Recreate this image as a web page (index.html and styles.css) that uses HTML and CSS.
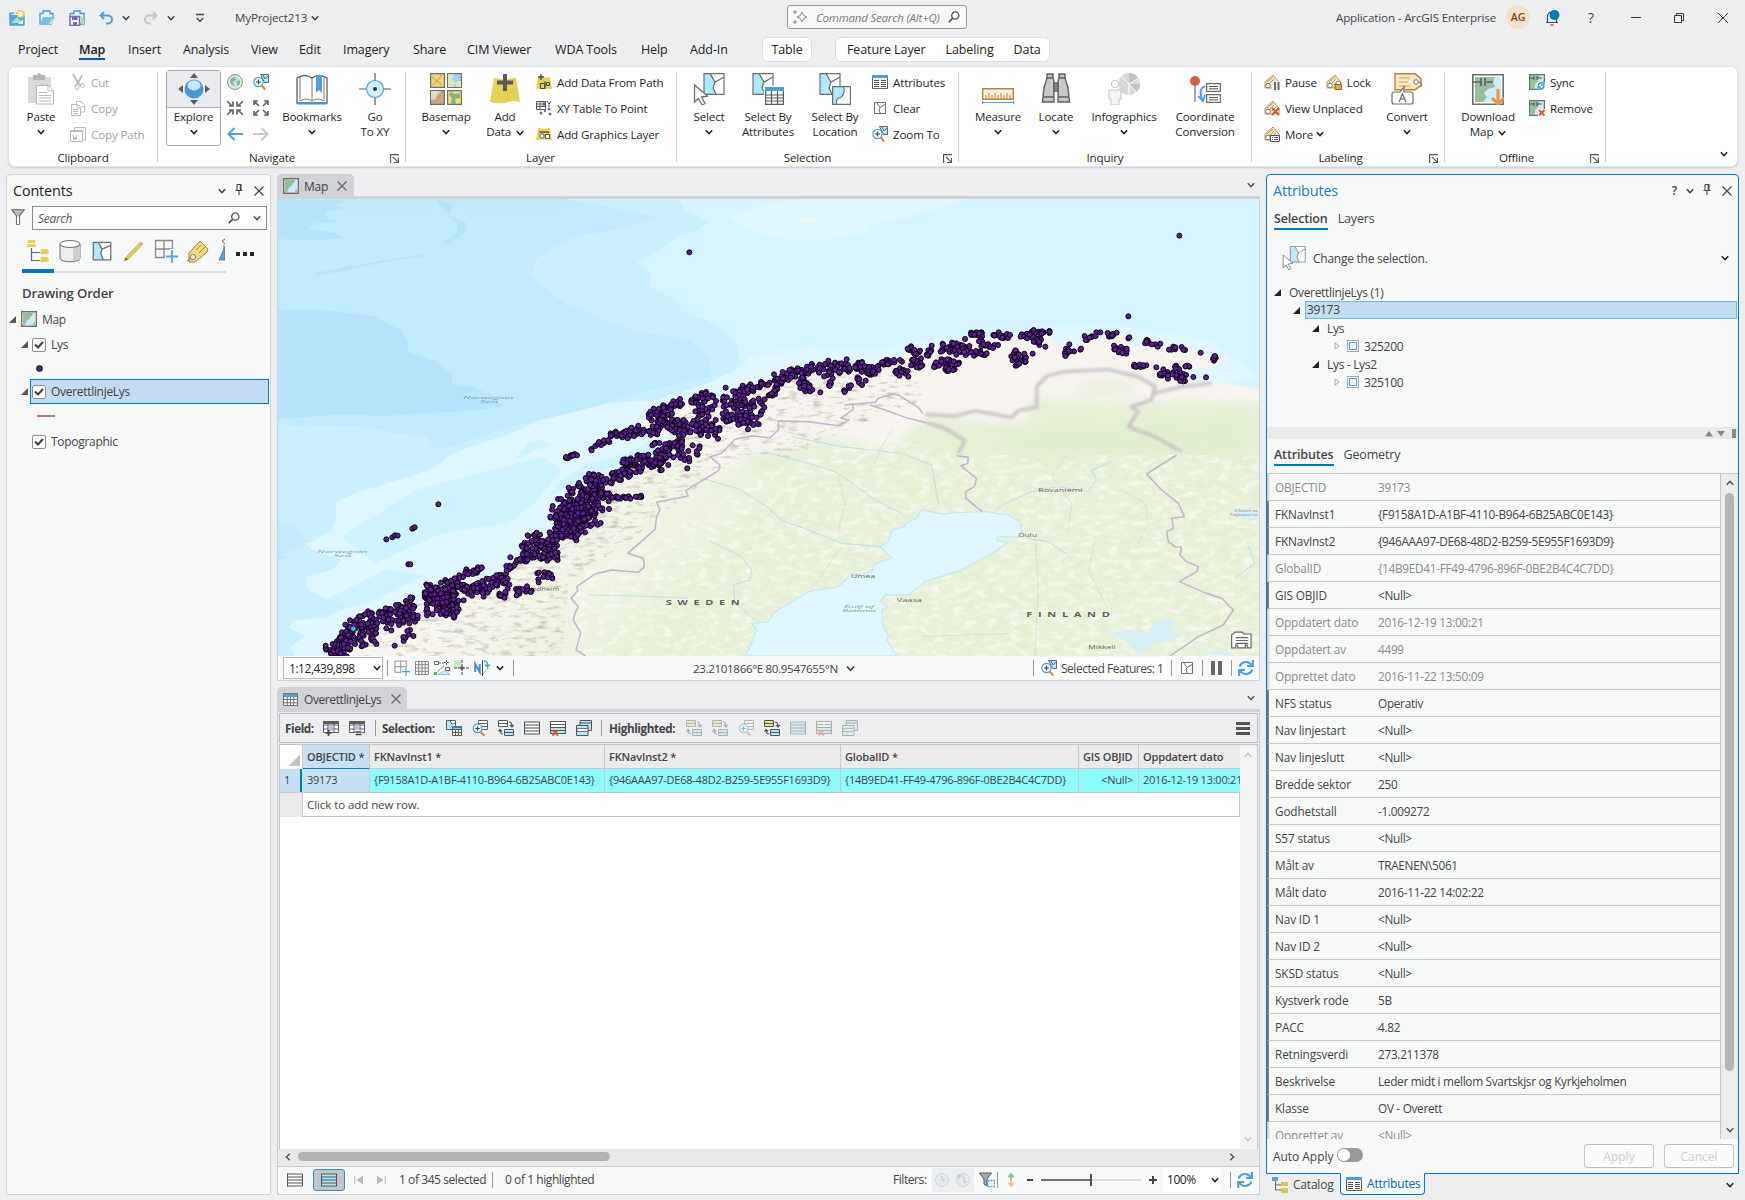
FILE: index.html
```html
<!DOCTYPE html>
<html lang="en">
<head>
<meta charset="utf-8">
<title>MyProject213</title>
<link rel="stylesheet" href="styles.css">
</head>
<body>
<svg class="sprite" aria-hidden="true">
<symbol id="chev" viewBox="0 0 8 8"><path d="M.8 2.2 4 5.6 7.2 2.2" fill="none" stroke="currentColor" stroke-width="1.5"/></symbol>
<symbol id="close" viewBox="0 0 10 10"><path d="M.5.5l9 9M9.500.5l-9 9" fill="none" stroke="currentColor" stroke-width="1.2"/></symbol>
<symbol id="pin" viewBox="0 0 8 12"><path d="M2 .5h4v6M2 .5v6M5.300.5v6M.5 6.500h7M4 6.500V11" fill="none" stroke="currentColor" stroke-width="1.1"/></symbol>
<symbol id="launch" viewBox="0 0 8 8"><path d="M.5 8V.5H8M7.500 3.500v4h-4M2.500 2.500l5 5" fill="none" stroke="#555"/></symbol>
<symbol id="glass" viewBox="0 0 12 12"><circle cx="7.300" cy="4.500" r="3.600" fill="none" stroke="currentColor" stroke-width="1.300"/><path d="M4.700 7.200.8 11.200" stroke="currentColor" stroke-width="1.700"/></symbol>
<symbol id="tri" viewBox="0 0 7 7"><path d="M7 0v7H0z" fill="currentColor"/></symbol>
<symbol id="mapico" viewBox="0 0 16 16"><path d="M.7.7h14.600v14.600H.7z" fill="#fff" stroke="#6e6e6e" stroke-width="1.400"/><path d="M2 2h12v12H2z" fill="#cfeaf8"/><path d="M2 2h10l-1 3-2 1v2l-3 1-1 3-1 2H2z" fill="#96c09c"/><path d="M12 14l1-3h1v3z" fill="#96c09c"/></symbol>
<symbol id="sel" viewBox="0 0 16 16"><path d="M1 1h14v14H1z" fill="#fff"/><path d="M1 1h4l3 5-1 4 2 5H1z" fill="#aee8fb"/><path d="M1 1h14v14H1zM5 1l3 5.500 7-3M8 6.500 7 10l2 5" fill="none" stroke="#6e6e6e" stroke-width="1"/></symbol>
<symbol id="zoomto" viewBox="0 0 16 16"><path d="M7.500.5h8v8h-4z" fill="#aee8fb" stroke="#666"/><path d="M10 1l2 4 3-3" fill="none" stroke="#666"/><circle cx="5.500" cy="8" r="4.600" fill="#f3fbff" stroke="#4b9fd4" stroke-width="1.200"/><path d="M3 8h5M5.500 5.500v5" stroke="#444" stroke-width="1.200"/><path d="M8.700 11.500l3.500 4" stroke="#c08b4f" stroke-width="2"/></symbol>
<symbol id="newprj" viewBox="0 0 16 16"><path d="M.5 5.500V3h5M.8 5.500h14.400v9.700H.8z" fill="#56a5da" stroke="#56a5da"/><path d="M2 13l6-6 6 6z" fill="#a7d6f2"/><path d="M9 14l5-5v5z" fill="#dfeecb"/><circle cx="11.500" cy="4" r="3.500" fill="#fff3b0" stroke="#e5b93a" stroke-dasharray="1.500 1.200" stroke-width="1.800"/></symbol>
<symbol id="openprj" viewBox="0 0 16 16"><path d="M1 14.500V3.500h3V1h7v2.500h3v4" fill="#eaf6fd" stroke="#4397cf" stroke-width="1.300"/><path d="M.8 15l3-8h12l-3 8z" fill="#7bbfe6"/><path d="M10 14l3-5h2l-2 5z" fill="#cfe5b8"/></symbol>
<symbol id="saveprj" viewBox="0 0 16 16"><path d="M1 6V3.500h4V1h6v2.500h4V14h-4" fill="#eaf6fd" stroke="#4397cf" stroke-width="1.300"/><path d="M12 5l3 5v4h-3z" fill="#b6dba0"/><path d="M1 6.500h9.500v9H1z" fill="#fff" stroke="#7b68b0" stroke-width="1.600"/><path d="M3 7h5.500v3H3zM4 12h4v3H4z" fill="#7b68b0"/></symbol>
<symbol id="undo" viewBox="0 0 14 14"><path d="M5 1 1.500 4.500 5 8M2 4.500h7a3.800 3.800 0 0 1 0 8H7" fill="none" stroke="currentColor" stroke-width="1.900"/></symbol>
<symbol id="paste" viewBox="0 0 32 32"><path d="M3 4h23v26H3z" fill="#d9d9d9"/><path d="M8 2h12v5H8z" fill="#b5b5b5"/><circle cx="14" cy="2" r="2" fill="#b5b5b5"/><path d="M11.500 12.500h12l5 5V31h-17z" fill="#fff" stroke="#b9b9b9"/><path d="M23 12.500v5.500h5.500M14 19.500h8M14 22.500h12M14 25h12M14 28h12" fill="none" stroke="#b9b9b9"/></symbol>
<symbol id="cut" viewBox="0 0 16 16"><path d="M3 0l5 9 3 3M12 1 8 9l-3 3" fill="none" stroke="#b9b9b9" stroke-width="1.700"/><circle cx="7" cy="13.500" r="1.900" fill="none" stroke="#b9b9b9"/><circle cx="12.500" cy="11.500" r="1.900" fill="none" stroke="#b9b9b9"/></symbol>
<symbol id="copy" viewBox="0 0 16 16"><path d="M6.500 4V1.500h5l3 3V12H11M1.500 4.500h6l3 3v8h-9zM7 4.500V8h3.500M3 9.500h5M3 11.500h5M3 13.500h5M11 6.500h3" fill="#fff" stroke="#b9b9b9"/></symbol>
<symbol id="copyp" viewBox="0 0 16 16"><path d="M4.500 4V1.500h11V14H13M.5 4.500h12v11H.5z" fill="#fff" stroke="#b9b9b9"/><path d="M.5 5.500H12M3 9l1 5 1-3 1 3 1-5M9 14h1" fill="none" stroke="#b9b9b9"/></symbol>
<symbol id="explore" viewBox="0 0 32 32"><path d="M16 0l4 5h-8zM16 32l4-5h-8zM0 16l5-4v8zM32 16l-5-4v8z" fill="#5e5e5e"/><circle cx="16" cy="16" r="9.500" fill="#459bd6"/><ellipse cx="16" cy="12.500" rx="6.500" ry="5" fill="#c5e8fb"/></symbol>
<symbol id="globe" viewBox="0 0 16 16"><circle cx="8" cy="8" r="7.400" fill="#eee" stroke="#888"/><circle cx="8" cy="8" r="5.800" fill="#bfe0f2"/><path d="M4 4l4-1 1 3-3 2 1 4-3-2-1-3zM10 7l3-1v4l-3 2z" fill="#82b794"/></symbol>
<symbol id="inarr" viewBox="0 0 16 16"><path d="M0 1l5 5M2 6h4V1.500M16 1l-5 5M14 6h-4V1.500M0 15l5-5M2 10h4v4.500M16 15l-5-5M14 10h-4v4.500" fill="none" stroke="#666" stroke-width="1.700"/></symbol>
<symbol id="outarr" viewBox="0 0 16 16"><path d="M6 6 1 1M1 5V1h4M10 6l5-5M15 5V1h-4M6 10l-5 5M1 11v4h4M10 10l5 5M15 11v4h-4" fill="none" stroke="#666" stroke-width="1.700"/></symbol>
<symbol id="back" viewBox="0 0 16 16"><path d="M7.500 2 1.500 8l6 6M1.500 8H16" fill="none" stroke="currentColor" stroke-width="2"/></symbol>
<symbol id="book" viewBox="0 0 32 32"><path d="M1 30V5q8-5 15 0 7-5 15 0v25z" fill="#fff" stroke="#5f5f5f" stroke-width="1.300"/><path d="M4 28V4M28 28V4M16 5v22" stroke="#777" fill="none"/><path d="M4 28q6-4 12 0 6-4 12 0" fill="none" stroke="#777"/><path d="M1 30.500h30" stroke="#3f97d3" stroke-width="2"/><path d="M20 2h6v18l-3-3-3 3z" fill="#4aa0da"/></symbol>
<symbol id="goxy" viewBox="0 0 32 32"><path d="M16 0v8M16 24v8M0 16h8M24 16h8" stroke="#555" stroke-width="1.200"/><circle cx="16" cy="16" r="8.500" fill="#d2effd" stroke="#4aa0da" stroke-width="1.200"/><circle cx="16" cy="16" r="2" fill="#333"/></symbol>
<symbol id="basemap" viewBox="0 0 32 32"><g stroke="#6e6e6e" stroke-width="1.200"><path d="M.6.6h13.800v13.800H.6z" fill="#f0d575"/><path d="M17.600.6h13.800v13.800H17.600z" fill="#9fd3f2"/><path d="M.6 17.600h13.800v13.800H.6z" fill="#c9a684"/><path d="M17.600 17.600h13.800v13.800H17.600z" fill="#f3dc84"/></g><path d="M2 4l10 8M3 12l9-10" stroke="#c9915a"/><path d="M18 1h6l-2 6 4 3-2 4h-6zM27 8h4v6h-5z" fill="#d8e8b8"/><path d="M1 18h10l-4 4-1 4-5 1z" fill="#e8d3bb"/><path d="M21 18l3 3 6-1v5l-5 1 1 5h-5l1-6-3-3z" fill="#7fb77c"/></symbol>
<symbol id="adddata" viewBox="0 0 32 32"><path d="M5 5q11 2 22 0l4 24q-8-2-15 1-8 1-15-1z" fill="#e5d158"/><path d="M16 1v17M8 9.500h16" stroke="#5b5b5b" stroke-width="4"/></symbol>
<symbol id="addpath" viewBox="0 0 16 16"><path d="M2 3q6 1 12 0l2 12q-8-1-16 0z" fill="#e5d158"/><path d="M5 0v6M2 3h6" stroke="#444" stroke-width="1.300"/><path d="M4.500 9.500h4v5h-4zM9 7v8M10.500 8.500h3v3h-3z" fill="none" stroke="#444"/></symbol>
<symbol id="xyt" viewBox="0 0 16 16"><path d="M.5 1.500h9v8h-9zM.5 4h9M.5 6.500h9M4 2v7" fill="#fff" stroke="#555"/><path d="M6 1l4 6M10 1 6 7M11 1l2 3 2-3M13 4v3" stroke="#555" fill="none"/><g fill="#7b68b0"><circle cx="13" cy="9" r="1.500"/><circle cx="5" cy="13" r="1.500"/><circle cx="14" cy="14" r="1.500"/><circle cx="9" cy="11" r="1.200"/></g></symbol>
<symbol id="addgfx" viewBox="0 0 16 16"><path d="M2 2q6 1 12 0l2 12q-8-1-16 0z" fill="#e5d158"/><path d="M3 6h10" stroke="#555" stroke-width="1.500"/><circle cx="6" cy="10" r="2.200" fill="#fff" stroke="#555"/><path d="M9.500 8.500h4v4h-4z" fill="#fff" stroke="#555"/></symbol>
<symbol id="select32" viewBox="0 0 32 32"><path d="M11 .6h20v20.800H11z" fill="#fff"/><path d="M11 .6h6l5 8-2 6 3 7H11z" fill="#aee8fb"/><path d="M11 .6h20v20.800H11zM17 .6l5 8.500 9-5M22 9l-2 6 3 6" fill="none" stroke="#6e6e6e" stroke-width="1.200"/><path d="M1.500 12v17l4-3.500 3.500 6.500 3-1.500-3.500-6.500 6-1z" fill="#fff" stroke="#6e6e6e" stroke-width="1.300"/></symbol>
<symbol id="selattr" viewBox="0 0 32 32"><path d="M1 .6h20v20.800H1z" fill="#fff"/><path d="M1 .6h6l5 8-2 6 3 7H1z" fill="#aee8fb"/><path d="M1 .6h20v20.800H1zM7 .6l5 8.500 9-5M12 9l-2 6 3 6" fill="none" stroke="#6e6e6e" stroke-width="1.200"/><path d="M12 13h20v19H12z" fill="#fff"/><path d="M13.600 14.600h17.800v16.800H13.600zM13.600 22h18M13.600 25h18M13.600 28h18M19.500 18v13M25.500 18v13" fill="none" stroke="#5d5d5d" stroke-width="1.200"/><path d="M13 14h19v4H13z" fill="#4d9ed8"/></symbol>
<symbol id="selloc" viewBox="0 0 32 32"><path d="M1 .6h20v20.800H1z" fill="#fff"/><path d="M1 .6h6l5 8-2 6 3 7H1z" fill="#aee8fb"/><path d="M1 .6h20v20.800H1zM7 .6l5 8.500 9-5M12 9l-2 6 3 6" fill="none" stroke="#6e6e6e" stroke-width="1.200"/><path d="M13.600 13.600h17.800v17.800H13.600z" fill="#fff"/><path d="M13.600 13.600h11q2 7-3 11-5 0-4 7h-4z" fill="#aee8fb"/><path d="M13.600 13.600h17.800v17.800H13.600zM24.600 13.600q2 7-3 11-5 0-4 7" fill="none" stroke="#6e6e6e" stroke-width="1.200"/></symbol>
<symbol id="attrs" viewBox="0 0 16 16"><path d="M.5 1.500h15v13H.5z" fill="#fff" stroke="#5d5d5d"/><path d="M0 1h16v3H0z" fill="#4d9ed8"/><path d="M2 6.500h5M9 6.500h5M2 8.500h5M9 8.500h5M2 10.500h5M9 10.500h5M2 12.500h5M9 12.500h5" stroke="#555"/></symbol>
<symbol id="clear" viewBox="0 0 16 16"><path d="M2.500 2.500h11v11h-11z" fill="#fff" stroke="#6e6e6e"/><path d="M4.500 2.500l3.500 5 5-3M8 7.500 7 10l1.500 3.500" fill="none" stroke="#6e6e6e"/></symbol>
<symbol id="measure" viewBox="0 0 32 32"><path d="M.7 15.700h30.600v10.600H.7z" fill="#fdf3e3" stroke="#b8813f" stroke-width="1.400"/><path d="M4 26v-4M7 26v-6M10 26v-4M13 26v-6M16 26v-4M19 26v-6M22 26v-4M25 26v-6M28 26v-4" stroke="#b8813f"/><path d="M.5 28v3M31.500 28v3M1 29.500h30" stroke="#4d9ed8"/></symbol>
<symbol id="locate" viewBox="0 0 32 32"><path d="M7 1h6v4l1 3v21H2.500L4 15l3-10zM25 1h-6v4l-1 3v21h11.500L28 15 25 5z" fill="#c8c8c8" stroke="#5f5f5f" stroke-width="1.400"/><path d="M14 10h4v8h-4zM7 5h6M19 5h6M3 24h11M18 24h11" fill="#888" stroke="#5f5f5f" stroke-width="1.400"/></symbol>
<symbol id="info" viewBox="0 0 32 32"><circle cx="21" cy="11" r="11" fill="#d9d9d9"/><path d="M21 11V0a11 11 0 0 1 9 5zM21 11l8 8a11 11 0 0 0 3-8z" fill="#c2c2c2"/><path d="M21 11 13 3M21 11v11M21 11l10-6M21 11l8 9" stroke="#fff"/><circle cx="7" cy="11" r="3.700" fill="#fff" stroke="#c4c4c4"/><path d="M1 17h12v9h-2v6H3v-6H1z" fill="#f4f4f4" stroke="#c4c4c4"/></symbol>
<symbol id="coord" viewBox="0 0 32 32"><path d="M6 8v21" stroke="#777" stroke-width="1.300"/><circle cx="6" cy="8" r="5" fill="#cf6248"/><path d="M17.600 10.600h13.800v7.800H17.600zM17.600 21.600h13.800v7.800H17.600z" fill="#fff" stroke="#6e6e6e" stroke-width="1.300"/><path d="M20 13.500h9M20 15.800h9M20 24.500h9M20 26.800h9" stroke="#555"/><path d="M16 13q-7 3-3 13M9 23l5 5 2-6" fill="none" stroke="#4d9ed8" stroke-width="1.800"/></symbol>
<symbol id="lbl" viewBox="0 0 16 16"><path d="M9 1l6 7v6H1V8z" fill="#f5e7c2" stroke="#b8985a"/><path d="M5 10l5-5M8 11l4-4M3 8l6-5" stroke="#b8985a"/><circle cx="4" cy="11.500" r="2.300" fill="#fff" stroke="#777"/></symbol>
<symbol id="lpause" viewBox="0 0 16 16"><use href="#lbl"/><path d="M8.500 7h8v9h-8z" fill="#fff"/><path d="M11 8v8M14.500 8v8" stroke="#666" stroke-width="2"/></symbol>
<symbol id="llock" viewBox="0 0 16 16"><use href="#lbl"/><path d="M10 11V8.500q2.500-3 4.500 0V11" fill="#fff" stroke="#777"/><path d="M9 10.500h6.500v5H9z" fill="#e8a448" stroke="#8b6530"/></symbol>
<symbol id="lun" viewBox="0 0 16 16"><use href="#lbl"/><path d="M8 8l7 7M15 8l-7 7" stroke="#cf5a3c" stroke-width="2"/></symbol>
<symbol id="lmore" viewBox="0 0 16 16"><use href="#lbl"/><path d="M6.500 9.500h9v6h-9z" fill="#fff" stroke="#555"/><path d="M10 11.500h4M10 13.500h4M8 11.500h1M8 13.500h1" stroke="#6950a0"/></symbol>
<symbol id="convert" viewBox="0 0 32 32"><path d="M4 .7h20l6 5v7l-6 4H4z" fill="#f8e9c0" stroke="#b8813f" stroke-width="1.400"/><path d="M8 5h11M8 9h9M8 13h11" stroke="#c9a058"/><circle cx="25" cy="9" r="2.300" fill="#fff" stroke="#777"/><path d="M27 9q5 0 3 5" fill="none" stroke="#777"/><path d="M3 19h6l4-5v5h7q2 0 2 2v8q0 2-2 2H3q-2 0-2-2v-8q0-2 2-2z" fill="#fff" stroke="#6e6e6e" stroke-width="1.200"/><path d="M8 29l3.500-8 3.500 8M9.500 26h4" fill="none" stroke="#666" stroke-width="1.200"/></symbol>
<symbol id="dmap" viewBox="0 0 32 32"><path d="M.8 1.800h30.400v29.400H.8z" fill="#fff" stroke="#6e6e6e" stroke-width="1.600"/><path d="M3 4h26v25H3z" fill="#cfeaf8"/><path d="M3 4h20l-2 5 2 5-7 2-4 4 3 4-4 5H3z" fill="#96c09c"/><path d="M0 9h9M13 5v8M9 5v8M13 9h8" stroke="#5f5f5f" stroke-width="1.600"/><path d="M26 16v14M20 25l6 6 6-6" fill="none" stroke="#e8973a" stroke-width="3"/></symbol>
<symbol id="msync" viewBox="0 0 16 16"><path d="M.6.6h14.800v14.800H.6z" fill="#cfeaf8" stroke="#6e6e6e" stroke-width="1.200"/><path d="M1 1h10l-2 6-3 3v5H1z" fill="#96c09c"/><path d="M0 4h5M5 2v4M8 2v4M8 4h5" stroke="#555"/><path d="M8 8h8v8H8z" fill="#fff"/><path d="M9 12q1-4 5-3M15 8v3h-3M15 12q-1 4-5 3M9 16v-3h3" fill="none" stroke="#3f97d3" stroke-width="1.400"/></symbol>
<symbol id="mrem" viewBox="0 0 16 16"><path d="M.6.6h14.800v14.800H.6z" fill="#cfeaf8" stroke="#6e6e6e" stroke-width="1.200"/><path d="M1 1h10l-2 6-3 3v5H1z" fill="#96c09c"/><path d="M0 4h5M5 2v4M8 2v4M8 4h5" stroke="#555"/><path d="M9 9h7v7H9z" fill="#fff"/><path d="M10 10l5.500 5.500M15.500 10 10 15.500" stroke="#cf5a3c" stroke-width="2"/></symbol>
<symbol id="tree" viewBox="0 0 24 24"><path d="M2 1h7l1 7H1zM15 10h7l1 5h-9zM15 18h7l1 5h-9z" fill="#e5d158"/><path d="M1 4.500h9" stroke="#f7f9f9"/><path d="M5.500 9v12.500H14M5.500 13.500H14" fill="none" stroke="#666" stroke-width="1.200"/></symbol>
<symbol id="cyl" viewBox="0 0 24 24"><path d="M2 5v14c0 5 20 5 20 0V5" fill="#ececec" stroke="#6e6e6e"/><path d="M15 8v14q7-1 7-3V5z" fill="#cfcfcf"/><ellipse cx="12" cy="5" rx="10" ry="3.500" fill="#fafafa" stroke="#6e6e6e"/></symbol>
<symbol id="pencil" viewBox="0 0 24 24"><path d="M3.500 18.500 17 4.500l2.300 2.300L6 20.500z" fill="#e5c94a" stroke="#b89a2e" stroke-width=".6"/><path d="M17 4.500l2-2 2.300 2.300-2 2z" fill="#e59a8c"/><path d="M2 22l1.500-3.500L6 20.500z" fill="#7a5a3a"/></symbol>
<symbol id="gridp" viewBox="0 0 24 24"><path d="M1.500 1.500h17v17h-17zM10 1.500v17M1.500 10h17" fill="none" stroke="#8a8a8a" stroke-width="1.300"/><path d="M18 10v14M11 17.500h14" stroke="#f7f9f9" stroke-width="4"/><path d="M18 11v13M12 17.500h12" stroke="#56a5da" stroke-width="1.800"/></symbol>
<symbol id="tag" viewBox="0 0 24 24"><path d="M3 14 14 2l8 8-1 3L9 23H3z" fill="#f2d784" stroke="#a8833c"/><path d="M10 11l5-5M13 14l6-6" stroke="#a8833c"/><circle cx="7" cy="18" r="2.500" fill="#fff" stroke="#777"/><path d="M5 19l-4 3" stroke="#777"/></symbol>
<symbol id="funnel" viewBox="0 0 14 16"><path d="M.7.7h12.600L8.500 7v8.300h-3V7z" fill="#bdbdbd" stroke="#6e6e6e" stroke-width="1.100"/><path d="M6 7.500h2V15H6z" fill="#f7f9f9"/></symbol>
<symbol id="tbl" viewBox="0 0 16 14"><path d="M.5.5h15v13H.5zM.5 4h15M.5 7h15M.5 10.500h15M4.500 4v9M8 4v9M11.500 4v9" fill="#fff" stroke="#666"/><path d="M1 1h14v3H1z" fill="#56a5da"/></symbol>
<symbol id="fadd" viewBox="0 0 16 16"><path d="M.5 1.500h15v11H.5zM.5 5h15M.5 9h15M5 1v11M11 1v11" fill="#fff" stroke="#5d5d5d"/><path d="M0 1h16v3H0z" fill="#5d5d5d"/><path d="M5.500 5h5v6h-5z" fill="#c6b6e0"/><path d="M5.500 10v6M2.500 13h6" stroke="#444" stroke-width="1.700"/></symbol>
<symbol id="fcalc" viewBox="0 0 16 16"><path d="M.5 1.500h15v11H.5zM.5 5h15M.5 9h15M5 1v11M11 1v11" fill="#fff" stroke="#5d5d5d"/><path d="M0 1h16v3H0z" fill="#5d5d5d"/><path d="M5.500 5h5v5h-5z" fill="#c6b6e0"/><path d="M6 10h7v6H6z" fill="#eef0f2"/><path d="M6.500 12h6M6.500 14.500h6" stroke="#444" stroke-width="1.300"/></symbol>
<symbol id="tsel" viewBox="0 0 16 16"><path d="M.5.5h9v9h-9z" fill="#fff" stroke="#5d5d5d"/><path d="M1 1h3l2 4v4H1z" fill="#aee8fb"/><path d="M4 .5l2 4 4-2" fill="none" stroke="#5d5d5d"/><path d="M6.500 6.500h9v9h-9zM6.500 9.500h9M6.500 12.500h9M9.500 9v6M12.500 9v6" fill="#fff" stroke="#5d5d5d"/><path d="M6 6h10v2.500H6z" fill="#3f7fb0"/></symbol>
<symbol id="tzoom" viewBox="0 0 16 16"><path d="M6.500.5h9v9h-9zM6.500 3.500h9M6.500 6.500h9" fill="#fff" stroke="#666"/><circle cx="5.500" cy="8.500" r="4.300" fill="#eaf7fe" stroke="#4b9fd4" stroke-width="1.200"/><path d="M3.300 8.500h4.400M5.500 6.300v4.400" stroke="#444"/><path d="M8.500 11.800l4 4" stroke="#c08b4f" stroke-width="2"/></symbol>
<symbol id="tswitch" viewBox="0 0 16 16"><path d="M.5.500h9v6h-9zM.5 3.500h9" fill="var(--h,#fff)" stroke="#555"/><path d="M6.500 9.500h9v6h-9z" fill="#aee8fb" stroke="#555"/><path d="M6.500 12.500h9M11 2q3 0 3 4M12 5l2 2 2-2M5 14q-3 0-3-4M.5 11.500 2 9.500l2 2" fill="none" stroke="#555" stroke-width="1.200"/></symbol>
<symbol id="tall" viewBox="0 0 16 16"><path d="M.5 2h15v12H.5zM.5 5h15M.5 8h15M.5 11h15" fill="var(--f,#fff)" stroke="#555" stroke-width="1.100"/></symbol>
<symbol id="tclear" viewBox="0 0 16 16"><path d="M.5 1.500h15v12H.5z" fill="#fff"/><path d="M1 8h14v5H1z" fill="#aee8fb"/><path d="M.5 1.500h15v12H.5zM.5 4.500h15M.5 7.500h15M.5 10.500h15" fill="none" stroke="#555" stroke-width="1.100"/><path d="M2.500 10l5.500 5.500M8 10l-5.500 5.500" stroke="#cf5a3c" stroke-width="2"/></symbol>
<symbol id="tcopy" viewBox="0 0 16 16"><path d="M4 .5h11.500v10H4zM4 3h11" fill="#aee8fb" stroke="#555"/><path d="M.5 5.500H12v10H.5z" fill="#aee8fb" stroke="#555"/><path d="M1 8.500h11v3H1z" fill="var(--h,#fff)" stroke="#555" stroke-width=".8"/></symbol>
<symbol id="refresh" viewBox="0 0 16 16"><path d="M1.500 6.500Q3.500 2 8 2q3.500 0 5.500 3M14.800 0v6H9M14.500 9.500Q12.500 14 8 14q-3.500 0-5.500-3M1.200 16v-6H7" fill="none" stroke="#4d9fd8" stroke-width="2.200"/></symbol>
<symbol id="selbox" viewBox="0 0 12 12"><path d="M.5.5h11v11H.5z" fill="none" stroke="#555" stroke-dasharray="1 1"/><path d="M2.500 2.500h7v7h-7z" fill="#fff" stroke="#56a5da" stroke-width="1.200"/></symbol>
<symbol id="check" viewBox="0 0 14 14"><path d="M.5 2Q.5.5 2 .5h10q1.500 0 1.500 1.500v10q0 1.500-1.500 1.500H2Q.5 13.500.5 12z" fill="#fff" stroke="#8c8c8c"/><path d="M3 6.500l3 3 5-5.500" fill="none" stroke="#3f3f3f" stroke-width="2"/></symbol>
<symbol id="ncirc" viewBox="0 0 16 16"><path d="M1.200 12V4l4.600 8V4" fill="none" stroke="#3f97d3" stroke-width="2"/><path d="M8.500 0v16" stroke="#444"/><path d="M9 14l6-7" stroke="#888" stroke-dasharray="2 1"/><path d="M10 1q4 0 3.500 5M11 4.500l2.300 2.300L16 4.500" fill="none" stroke="#3f97d3" stroke-width="1.300"/></symbol>
<symbol id="snap" viewBox="0 0 16 16"><path d="M.5 1.500h4v3h-4zM11.500 7.500h4v3h-4z" fill="#fff" stroke="#666"/><path d="M5 3h5M2 13l9-8M12.500 0v5M10 2.500h5" fill="none" stroke="#666" stroke-dasharray="2 1"/><path d="M4 14.500h12l-5-4z" fill="#cfeefb" stroke="#56a5da" stroke-width=".6"/><path d="M0 12h3v3H0z" fill="#6aa36d"/></symbol>
<symbol id="dyn" viewBox="0 0 16 16"><path d="M0 0h7v8H0z" fill="#c9e6c4"/><path d="M8 0v16M0 8h16" stroke="#999" stroke-width="2" stroke-dasharray="3 1"/><path d="M6.500 6.500h3v3h-3z" fill="#555"/></symbol>
<symbol id="ggrid" viewBox="0 0 14 14"><path d="M.5.5h13v13H.5zM3.700 1v13M7 1v13M10.300 1v13M1 3.700h13M1 7h13M1 10.300h13" fill="none" stroke="#8a8a8a"/></symbol>
<symbol id="catalog" viewBox="0 0 16 16"><path d="M0 0h6v4H0z" fill="#56a5da"/><path d="M3.500 4v9H9M3.500 8H9" fill="none" stroke="#666"/><path d="M9 5h7v4H9zM9 11h7v5H9z" fill="#d9c44e"/></symbol>
</svg>

<header class="titlebar">
  <svg class="i16"><use href="#newprj"/></svg><svg class="i16"><use href="#openprj"/></svg><svg class="i16"><use href="#saveprj"/></svg>
  <svg class="i14 blue"><use href="#undo"/></svg><svg class="i8"><use href="#chev"/></svg>
  <svg class="i14 faint flip"><use href="#undo"/></svg><svg class="i8"><use href="#chev"/></svg>
  <svg class="i10 customize" viewBox="0 0 10 10"><path d="M1 1.500h8M1.800 5 5 8.300 8.200 5" fill="none" stroke="#444" stroke-width="1.400"/></svg>
  <span>MyProject213</span><svg class="i8"><use href="#chev"/></svg>
  <div class="command"><svg class="i16" viewBox="0 0 16 16"><path d="M10 3q.8 4.500 5 5-4.200.5-5 5-.8-4.500-5-5 4.200-.5 5-5zM3 1v4M1 3h4M3 11v4M1 13h4" fill="none" stroke="#888"/></svg><i>Command Search (Alt+Q)</i><svg class="i12"><use href="#glass"/></svg></div>
  <span>Application - ArcGIS Enterprise</span><b class="avatar">AG</b>
  <svg class="i16" viewBox="0 0 16 16"><path d="M2 12.500h12M3.500 12V7q0-5 4.500-5t4.500 5v5M6.500 15h3" fill="none" stroke="#444" stroke-width="1.200"/><circle cx="10.500" cy="5" r="5" fill="#0079c1"/></svg>
  <span class="q">?</span>
  <svg class="i12" viewBox="0 0 12 12"><path d="M1 5.500h10" stroke="#333"/></svg>
  <svg class="i12" viewBox="0 0 12 12"><path d="M1.500 3.500h7v7h-7zM3.500 3.500v-2h7v7h-2" fill="none" stroke="#333"/></svg>
  <svg class="i12" viewBox="0 0 12 12"><path d="M1 1l10 10M11 1 1 11" stroke="#333"/></svg>
</header>

<nav class="tabs">
  <span>Project</span><b>Map</b><span>Insert</span><span>Analysis</span><span>View</span><span>Edit</span><span>Imagery</span><span>Share</span><span>CIM Viewer</span><span>WDA Tools</span><span>Help</span><span>Add-In</span>
  <div class="pill"><span>Table</span></div>
  <div class="pill wide"><span>Feature Layer</span><span>Labeling</span><span>Data</span></div>
</nav>

<section class="ribbon">
  <div class="group g1"><div class="body">
    <div class="big w50"><svg><use href="#paste"/></svg>Paste<svg class="i8"><use href="#chev"/></svg></div>
    <div class="smalls off"><div><svg><use href="#cut"/></svg>Cut</div><div><svg><use href="#copy"/></svg>Copy</div><div><svg><use href="#copyp"/></svg>Copy Path</div></div>
  </div><div class="cap">Clipboard</div></div>
  <div class="group g2"><div class="body">
    <div class="big explore"><span class="top"><svg><use href="#explore"/></svg></span>Explore<svg class="i8"><use href="#chev"/></svg></div>
    <div class="icons"><svg><use href="#globe"/></svg><svg><use href="#zoomto"/></svg><svg><use href="#inarr"/></svg><svg><use href="#outarr"/></svg><svg class="blue"><use href="#back"/></svg><svg class="faint flip"><use href="#back"/></svg></div>
    <div class="big w70"><svg><use href="#book"/></svg>Bookmarks<svg class="i8"><use href="#chev"/></svg></div>
    <div class="big w56"><svg><use href="#goxy"/></svg>Go<br>To XY</div>
  </div><div class="cap l"><span>Navigate</span><svg><use href="#launch"/></svg></div></div>
  <div class="group g3"><div class="body">
    <div class="big w60"><svg><use href="#basemap"/></svg>Basemap<svg class="i8"><use href="#chev"/></svg></div>
    <div class="big w58"><svg><use href="#adddata"/></svg>Add<span>Data <svg class="i8 in"><use href="#chev"/></svg></span></div>
    <div class="smalls"><div><svg><use href="#addpath"/></svg>Add Data From Path</div><div><svg><use href="#xyt"/></svg>XY Table To Point</div><div><svg><use href="#addgfx"/></svg>Add Graphics Layer</div></div>
  </div><div class="cap">Layer</div></div>
  <div class="group g4"><div class="body">
    <div class="big w50"><svg><use href="#select32"/></svg>Select<svg class="i8"><use href="#chev"/></svg></div>
    <div class="big w68"><svg><use href="#selattr"/></svg>Select By<br>Attributes</div>
    <div class="big w66"><svg><use href="#selloc"/></svg>Select By<br>Location</div>
    <div class="smalls"><div><svg><use href="#attrs"/></svg>Attributes</div><div><svg><use href="#clear"/></svg>Clear</div><div><svg><use href="#zoomto"/></svg>Zoom To</div></div>
  </div><div class="cap l"><span>Selection</span><svg><use href="#launch"/></svg></div></div>
  <div class="group g5"><div class="body">
    <div class="big w56"><svg><use href="#measure"/></svg>Measure<svg class="i8"><use href="#chev"/></svg></div>
    <div class="big w60"><svg><use href="#locate"/></svg>Locate<svg class="i8"><use href="#chev"/></svg></div>
    <div class="big w76"><svg><use href="#info"/></svg>Infographics<svg class="i8"><use href="#chev"/></svg></div>
    <div class="big w86"><svg><use href="#coord"/></svg>Coordinate<br>Conversion</div>
  </div><div class="cap">Inquiry</div></div>
  <div class="group g6"><div class="body">
    <div class="smalls"><div><svg><use href="#lpause"/></svg>Pause<svg class="second"><use href="#llock"/></svg>Lock</div><div><svg><use href="#lun"/></svg>View Unplaced</div><div><svg><use href="#lmore"/></svg>More <svg class="i8 in"><use href="#chev"/></svg></div></div>
    <div class="big w50"><svg><use href="#convert"/></svg>Convert<svg class="i8"><use href="#chev"/></svg></div>
  </div><div class="cap l"><span>Labeling</span><svg><use href="#launch"/></svg></div></div>
  <div class="group g7"><div class="body">
    <div class="big w66"><svg><use href="#dmap"/></svg>Download<span>Map <svg class="i8 in"><use href="#chev"/></svg></span></div>
    <div class="smalls"><div><svg><use href="#msync"/></svg>Sync</div><div><svg><use href="#mrem"/></svg>Remove</div></div>
  </div><div class="cap l"><span>Offline</span><svg><use href="#launch"/></svg></div></div>
  <svg class="i8 collapse"><use href="#chev"/></svg>
</section>

<main class="main">
  <aside class="contents">
    <div class="phead"><span>Contents</span><svg class="i8"><use href="#chev"/></svg><svg class="pin"><use href="#pin"/></svg><svg class="i10"><use href="#close"/></svg></div>
    <div class="searchrow"><svg class="fun"><use href="#funnel"/></svg><div class="search"><i>Search</i><svg class="i12"><use href="#glass"/></svg><svg class="i8"><use href="#chev"/></svg></div></div>
    <div class="views"><svg><use href="#tree"/></svg><svg><use href="#cyl"/></svg><svg class="s20"><use href="#sel"/></svg><svg><use href="#pencil"/></svg><svg><use href="#gridp"/></svg><svg><use href="#tag"/></svg><svg class="cutoff" viewBox="0 0 7 24"><path d="M7 1 4 3l3 3M6 11v-4" fill="none" stroke="#666"/><path d="M7 9 1 22h6z" fill="#56a5da" stroke="#666" stroke-width=".8"/></svg><b class="dots"><i></i><i></i><i></i></b></div>
    <div class="viewline"></div>
    <h2>Drawing Order</h2>
    <div class="tr map"><svg class="t"><use href="#tri"/></svg><svg class="i16"><use href="#mapico"/></svg>Map</div>
    <div class="tr lyr"><svg class="t"><use href="#tri"/></svg><span class="hl"><svg class="i14"><use href="#check"/></svg>Lys</span></div>
    <div class="sym"><svg class="dot" viewBox="0 0 9 9"><circle cx="4.500" cy="4.500" r="2.700" fill="#5b2093" stroke="#111" stroke-width="1.100"/></svg></div>
    <div class="tr lyr"><svg class="t"><use href="#tri"/></svg><span class="hl on"><svg class="i14"><use href="#check"/></svg>OverettlinjeLys</span></div>
    <div class="sym"><span class="line"></span></div>
    <div class="tr lyr last"><svg class="t hide"><use href="#tri"/></svg><span class="hl"><svg class="i14"><use href="#check"/></svg>Topographic</span></div>
  </aside>

  <section class="center">
    <div class="dtabs"><div class="dtab"><svg class="i16"><use href="#mapico"/></svg>Map<svg class="i10"><use href="#close"/></svg></div><svg class="i8"><use href="#chev"/></svg></div>
    <div class="mapview">
      <svg class="mapsvg" viewBox="9 87 2943 1371" preserveAspectRatio="none">
        <defs>
          <linearGradient id="land" gradientUnits="userSpaceOnUse" x1="900" y1="900" x2="1250" y2="1250"><stop offset="0" stop-color="#f7f5f0"/><stop offset=".4" stop-color="#f2f4e8"/><stop offset="1" stop-color="#e6f0d7"/></linearGradient>
          <filter id="relief" x="0" y="0" width="1" height="1"><feTurbulence type="fractalNoise" baseFrequency=".028 .09" numOctaves="5" seed="4"/><feColorMatrix values="0 0 0 0 .5  0 0 0 0 .48  0 0 0 0 .38  2.200 0 0 0 -1.130"/><feComposite in2="SourceGraphic" operator="in"/></filter>
          <filter id="speck" x="0" y="0" width="1" height="1"><feTurbulence type="fractalNoise" baseFrequency=".03 .06" numOctaves="5" seed="9"/><feColorMatrix values="0 0 0 0 .98  0 0 0 0 .97  0 0 0 0 .94  0 2.600 0 0 -1.200"/><feComposite in2="SourceGraphic" operator="in"/></filter>
          <filter id="soft"><feGaussianBlur stdDeviation="5"/></filter>
          <filter id="haze"><feGaussianBlur stdDeviation="16"/></filter>
          <clipPath id="coast"><path d="M175 1458L205 1400 280 1370 400 1325 450 1285 530 1235 640 1230 700 1195 760 1150 790 1110 830 1080 860 1010 900 965 960 930 1040 890 1150 860 1210 810 1130 790 1000 800 1120 750 1200 705 1300 675 1330 700 1380 680 1485 640 1560 605 1640 585 1760 595 1850 570 1910 545 2000 530 2080 505 2200 500 2320 495 2350 525 2380 550 2430 510 2540 495 2570 530 2640 520 2700 535 2780 550 2850 560 2820 590 2720 600 2700 625 2790 640 2860 640 2952 660V1458Z"/></clipPath>
        </defs>
        <path fill="#c1ebff" d="M9 87H2952V1458H9z"/>
        <path fill="#b6e4fe" d="M9 420L130 418 240 432 300 440 380 480 400 520 400 545 480 575 530 610 530 640 590 652 640 668 690 708 600 722 460 728 330 738 200 733 9 747Z"/>
        <path fill="#b6e4fe" d="M9 87L215 92 180 105 215 118 150 125 160 150 215 152 120 160 100 180 170 185 210 205 100 210 9 208ZM485 90L540 105 520 135 575 160 570 190 515 225 510 215 550 185 545 155 505 120ZM115 310L240 285 400 260 460 247 440 262 330 275 220 300 130 316Z"/>
        <path fill="#caf0ff" d="M860 87L1010 112 1160 145 1040 175 900 200 830 235 780 270 775 295 760 315 800 345 830 370 870 400 920 420 1000 455 1110 490 1200 500 1250 512 1300 560 1310 620 1200 645 1100 665 950 712 860 735 700 770 530 830 470 830 460 800 370 792 240 768 100 770 9 763V1050L60 1070 100 1120 9 1160V1458H2952V87Z"/>
        <path fill="#bce7fe" d="M9 1155L45 1163 9 1170Z"/>
        <path fill="#d5f4ff" d="M1210 87L1230 120 1300 155 1270 180 1200 205 1130 255 1085 275 1120 300 1130 320 1120 350 1165 370 1210 395 1215 420 1290 450 1340 475 1380 520 1395 560 1380 600 1300 640 2952 900V87Z"/>
        <path fill="#dff6ff" d="M1360 140L1430 115 1500 95 1600 87H2090L1960 120 1880 150 1780 165 1790 180 1700 205 1620 210 1485 205 1420 180ZM1420 560L1530 550 1490 540 1620 530 1680 540 1800 540 1900 520 2040 500 2080 490 1800 600 1400 620Z"/>
        <path fill="#dff6ff" d="M90 1120L120 1110 170 1080 185 1040 180 1000 240 970 340 940 480 895 520 860 560 840 680 800 800 750 900 725 1000 700 1150 690 1300 640 1400 590 1485 600 2000 520 2300 470 2550 470 2800 510 2952 620 1400 900 900 1200 200 1458H60L45 1430 90 1400 40 1370 60 1350 150 1345 220 1310 150 1285 100 1260 90 1220 170 1200 200 1170 110 1140Z"/>
        <path fill="#caf0ff" opacity=".75" d="M900 905L940 880 1060 850 1120 815 1170 800 1130 850 1060 870 960 910 880 950 820 980 850 940ZM720 870L760 820 800 810 840 825 780 840ZM150 1290L330 1200 450 1215 300 1290 200 1320ZM200 1100L420 960 800 860 860 900 780 1000 700 1060 500 1090 300 1180Z"/>
        <path fill="#f7f4ef" d="M1575 148L1600 142 1628 149 1605 158Z"/>
        <g clip-path="url(#coast)">
          <path fill="url(#land)" d="M9 400H2952V1458H9z"/>
          <path fill="#f7f4f0" filter="url(#haze)" d="M1380 620L1900 500 2500 460 2980 500V700L2700 690 2500 700 2270 680 2250 760 1950 740 1850 830 1650 800 1450 860 1250 930Z"/>
          <path fill="#e0edcf" opacity=".7" filter="url(#haze)" d="M2150 820L2350 760 2600 780 2600 730 2750 760 2920 720V860L2500 850 2300 870ZM2420 640L2560 630 2590 670 2400 680ZM1410 850L1520 860 1540 890 1420 900Z"/>
          <path filter="url(#relief)" fill="#000" d="M205 1458L205 1340 500 1220 800 1060 1000 850 1380 660 1900 560 1950 700 1850 720 1550 860 1380 870 1200 1000 1080 1100 880 1240 860 1458Z"/>
          <path filter="url(#speck)" fill="#000" opacity=".75" d="M900 1458V1220L1100 1130 1480 900 1800 790 2040 855H2952V1458Z"/>
        </g>
        <path fill="#dff6ff" stroke="#c6e8f5" stroke-width="4" stroke-linejoin="round" d="M1410 1458L1425 1430 1445 1380 1430 1360 1480 1355 1500 1325 1560 1290 1600 1265 1690 1250 1720 1220 1790 1205 1800 1180 1850 1165 1815 1130 1840 1115 1850 1080 1890 1070 1890 1060 1925 1045 1940 1020 2000 1032 2040 1028 2130 1025 2200 1035 2235 1055 2240 1085 2230 1100 2170 1100 2165 1112 2200 1118 2160 1145 2060 1200 1980 1225 1950 1235 1900 1275 1830 1275 1815 1295 1840 1310 1820 1320 1825 1370 1840 1395 1835 1410 1865 1458Z"/>
        <path fill="#d2effa" opacity=".8" d="M2500 1390L2560 1380 2620 1385 2650 1350 2700 1350 2690 1385 2720 1400 2640 1420 2590 1458 2560 1420ZM2880 1025L2952 1025V1050L2900 1045ZM2760 1450L2850 1440 2880 1458Z"/>
        <g fill="none" stroke="#b2dbe9" stroke-width="3" opacity=".8">
          <path d="M1300 1110L1400 1160 1430 1200 1425 1230 1375 1245 1380 1300 1440 1350M1485 850L1600 880 1680 905 1760 960 1800 990 1880 1030M1485 1020L1520 1050 1600 1080 1700 1120 1820 1130M1550 800L1700 830 1880 850 1970 885 1990 1000M2160 1025L2190 1000 2270 965 2350 950 2440 965 2465 930 2450 900 2510 875M2255 1105L2320 1115 2380 1155M940 1275L1090 1278 1240 1285M1300 930L1400 960 1490 1020M2920 1130L2940 1180 2880 1225M480 1380L560 1390 640 1430M860 1130L1000 1060"/>
        </g>
        <g fill="none" stroke="#d6d2d9" stroke-width="2" opacity=".9">
          <path d="M1800 880L1820 830 1850 780M2280 1100L2290 1250 2280 1458M2370 860L2330 920 2390 1000 2380 1080M2460 1110L2440 1200 2500 1320M1600 1270L1700 1130M2540 960L2610 1000 2620 1060 2590 1120M1690 920L1710 1000 1690 1080M1940 1400L2200 1390"/>
        </g>
        <g fill="none" stroke="#c8b3cd" stroke-width="4.500" stroke-linejoin="round">
          <path d="M932 1458L903 1440 917 1388 895 1350 900 1330 910 1310 888 1285 908 1262 905 1250 960 1212 1010 1200 1090 1207 1108 1190 1105 1165 1058 1150 1140 1078 1145 1040 1155 1020 1145 997 1240 978 1232 962 1330 902 1335 885 1305 860 1340 850 1380 808 1430 798 1485 803 1510 780 1510 752 1600 755 1690 767 1722 750 1697 745 1735 718 1733 702 1710 705 1800 697 1810 685 1855 672 1870 675 1930 712 1943 730"/>
          <path d="M1785 705L1830 720 1900 745 1955 758M2045 857L2080 862 2078 880 2058 888 2105 925 2098 950 2072 965 2073 985 2122 1025M2705 855L2615 912 2660 960 2710 1000 2728 1040 2690 1045 2695 1075 2675 1085 2680 1115 2700 1130 2720 1132 2715 1155 2735 1175 2770 1190 2765 1205 2713 1235 2790 1268 2840 1285 2875 1320 2845 1365 2770 1400 2685 1458"/>
        </g>
        <g fill="none" stroke="#c9c2c5" stroke-width="10" filter="url(#soft)">
          <path d="M1950 733L2040 738 2100 722 2210 742 2230 722 2285 712 2285 650 2315 618 2370 605 2500 598 2590 620 2640 650 2630 690 2570 710 2590 725 2560 770 2640 800 2720 845M1955 758L2010 775 2070 812 2050 850M2630 672L2720 650 2810 640"/>
        </g>
        <g class="sea"><text x="565" y="686" textLength="150">Norwegian</text><text x="615" y="698" textLength="54">Sea</text><text x="127" y="1149" textLength="150">Norwegian</text><text x="175" y="1162" textLength="54">Sea</text><text x="1707" y="1313" textLength="90">Gulf of</text><text x="1702" y="1326" textLength="100">Bothnia</text><text x="2878" y="1027" textLength="70">Ozero</text><text x="2862" y="1038" textLength="86">Topozero</text></g>
        <g class="town"><text x="735" y="1262" textLength="118">Trondheim</text><text x="2290" y="965" textLength="132">Rovaniemi</text><text x="2230" y="1102" textLength="56">Oulu</text><text x="1728" y="1223" textLength="72">Umea</text><text x="1865" y="1297" textLength="76">Vaasa</text><text x="2440" y="1438" textLength="82">Mikkeli</text></g>
        <g class="land"><g transform="translate(1172 1304) scale(1.500 1)"><text textLength="148">SWEDEN</text></g><g transform="translate(2254 1342) scale(1.500 1)"><text textLength="167">FINLAND</text></g></g>
        <g id="lights"></g>
        <circle cx="235" cy="1376" r="8" fill="#20c8e0" stroke="#123" stroke-width="2"/>
      </svg>
      <svg class="legend" viewBox="0 0 22 18"><path d="M.7 3.500l2-1L4 .7h8l1 2h8v14.600h-4v-3h-2v3H7v-3H5v3H.7zM5 6.500h13M5 9.500h13M5 12.500h13" fill="#fff" stroke="#666" stroke-width="1.200"/></svg>
    </div>
    <div class="mapbar"><div class="scale">1:12,439,898<svg class="i8"><use href="#chev"/></svg></div><i class="vs"></i><svg class="i16"><use href="#gridp"/></svg><svg class="i14"><use href="#ggrid"/></svg><svg class="i16"><use href="#snap"/></svg><svg class="i16"><use href="#dyn"/></svg><svg class="i16"><use href="#ncirc"/></svg><svg class="i8 dark"><use href="#chev"/></svg><i class="vs"></i><span class="coords">23.2101866°E 80.9547655°N</span><svg class="c10"><use href="#chev"/></svg><i class="vs"></i><span class="selfeat"><svg class="i16"><use href="#zoomto"/></svg>Selected Features: 1</span><i class="vs"></i><svg class="i16"><use href="#clear"/></svg><i class="vs"></i><i class="pause"></i><i class="vs"></i><svg class="i16"><use href="#refresh"/></svg></div>

    <div class="dtabs second"><div class="dtab"><svg class="tb"><use href="#tbl"/></svg>OverettlinjeLys<svg class="i10"><use href="#close"/></svg></div><svg class="i8"><use href="#chev"/></svg></div>
    <div class="tpane">
      <div class="ttools"><b>Field:</b><svg><use href="#fadd"/></svg><svg><use href="#fcalc"/></svg><i class="vs"></i><b>Selection:</b><svg><use href="#tsel"/></svg><svg><use href="#tzoom"/></svg><svg><use href="#tswitch"/></svg><svg><use href="#tall"/></svg><svg><use href="#tclear"/></svg><svg><use href="#tcopy"/></svg><i class="vs"></i><b>Highlighted:</b><svg class="dim y"><use href="#tswitch"/></svg><svg class="dim y"><use href="#tswitch"/></svg><svg class="dim"><use href="#tzoom"/></svg><svg class="y"><use href="#tswitch"/></svg><svg class="dim cy"><use href="#tall"/></svg><svg class="dim y"><use href="#tclear"/></svg><svg class="dim y"><use href="#tcopy"/></svg><span class="burger"></span></div>
      <div class="tgrid">
        <div class="cols">
          <div class="row head"><span class="corner"></span><span class="sorted">OBJECTID *</span><span>FKNavInst1 *</span><span>FKNavInst2 *</span><span>GlobalID *</span><span>GIS OBJID</span><span>Oppdatert dato</span></div>
          <div class="row rec"><span class="num">1</span><span class="id">39173</span><span>{F9158A1D-A1BF-4110-B964-6B25ABC0E143}</span><span>{946AAA97-DE68-48D2-B259-5E955F1693D9}</span><span>{14B9ED41-FF49-4796-896F-0BE2B4C4C7DD}</span><span class="r">&lt;Null&gt;</span><span>2016-12-19 13:00:21</span></div>
          <div class="row add"><span class="num"></span><span>Click to add new row.</span></div>
        </div>
        <div class="vbar"><svg class="i8 up"><use href="#chev"/></svg><svg class="i8"><use href="#chev"/></svg></div>
      </div>
      <div class="hbar"><svg class="i8 lf"><use href="#chev"/></svg><i></i><svg class="i8 rt"><use href="#chev"/></svg></div>
      <div class="tstatus"><svg class="i16"><use href="#tall"/></svg><span class="act"><svg class="i16 cy"><use href="#tall"/></svg></span><svg class="nav" viewBox="0 0 9 8"><path d="M.7 0v8M9 0 3 4l6 4z" fill="#bbb" stroke="#bbb"/></svg><svg class="nav" viewBox="0 0 9 8"><path d="M8.300 0v8M0 0l6 4-6 4z" fill="#bbb" stroke="#bbb"/></svg><span>1 of 345 selected</span><i class="vs"></i><span>0 of 1 highlighted</span><span>Filters:</span><span class="clocks"><svg class="i16" viewBox="0 0 16 16"><circle cx="8" cy="8" r="6.500" fill="#e6eaed" stroke="#d0d5d8"/><path d="M8 4v4h3" fill="none" stroke="#b9c0c4"/></svg><svg class="i16" viewBox="0 0 16 16"><circle cx="8" cy="8" r="6.500" fill="#e6eaed" stroke="#d0d5d8"/><path d="M2 4h6M4 2v5M9 5v5h3" fill="none" stroke="#b9c0c4"/></svg></span><svg class="i16" viewBox="0 0 16 16"><path d="M.5 1h12L8 7v7l-3-2V7z" fill="#aaa" stroke="#555"/><path d="M8.500 8.500h7v6h-7z" fill="#fff" stroke="#3f97d3" stroke-dasharray="2 1" stroke-width="1.600"/></svg><i class="vs"></i><svg class="i14" viewBox="0 0 14 16"><path d="M7 8V2M4 5l3-4 3 4" fill="none" stroke="#8fc09a" stroke-width="2"/><path d="M7 8v6M4 11l3 4 3-4" fill="none" stroke="#f0c48f" stroke-width="2"/></svg><i class="minus"></i><span class="slider"><i></i></span><i class="plus"></i><span class="pct">100%<svg class="i8"><use href="#chev"/></svg></span><i class="vs"></i><svg class="i16"><use href="#refresh"/></svg></div>
    </div>
  </section>

  <section class="right">
    <div class="attr">
      <div class="phead"><span>Attributes</span><b>?</b><svg class="i8"><use href="#chev"/></svg><svg class="pin"><use href="#pin"/></svg><svg class="i10"><use href="#close"/></svg></div>
      <div class="stabs"><b>Selection</b><span>Layers</span></div>
      <div class="chg"><svg><use href="#select32"/></svg><span>Change the selection.</span><svg class="i8 dark"><use href="#chev"/></svg></div>
      <div class="tree">
        <div class="n0"><svg class="t"><use href="#tri"/></svg><span>OverettlinjeLys (1)</span></div>
        <div class="n1"><svg class="t"><use href="#tri"/></svg><span class="picked">39173</span></div>
        <div class="n2"><svg class="t"><use href="#tri"/></svg><span>Lys</span></div>
        <div class="n3"><svg class="t c" viewBox="0 0 7 8"><path d="M1 .8 5 4 1 7.200z" fill="none" stroke="#aaa"/></svg><svg class="i12"><use href="#selbox"/></svg><span>325200</span></div>
        <div class="n2"><svg class="t"><use href="#tri"/></svg><span>Lys - Lys2</span></div>
        <div class="n3"><svg class="t c" viewBox="0 0 7 8"><path d="M1 .8 5 4 1 7.200z" fill="none" stroke="#aaa"/></svg><svg class="i12"><use href="#selbox"/></svg><span>325100</span></div>
      </div>
      <div class="split"><svg viewBox="0 0 32 9"><path d="M0 7.500 4 2l4 5.500zM12 2h8l-4 5.500z" fill="#8a8a8a"/><path d="M27 0h4v9h-4z" fill="#8a8a8a"/></svg></div>
      <div class="stabs low"><b>Attributes</b><span>Geometry</span></div>
      <div class="props">
        <div class="plist">
          <div class="ro"><span>OBJECTID</span><span>39173</span></div>
          <div><span>FKNavInst1</span><span>{F9158A1D-A1BF-4110-B964-6B25ABC0E143}</span></div>
          <div><span>FKNavInst2</span><span>{946AAA97-DE68-48D2-B259-5E955F1693D9}</span></div>
          <div class="ro"><span>GlobalID</span><span>{14B9ED41-FF49-4796-896F-0BE2B4C4C7DD}</span></div>
          <div><span>GIS OBJID</span><span>&lt;Null&gt;</span></div>
          <div class="ro"><span>Oppdatert dato</span><span>2016-12-19 13:00:21</span></div>
          <div class="ro"><span>Oppdatert av</span><span>4499</span></div>
          <div class="ro"><span>Opprettet dato</span><span>2016-11-22 13:50:09</span></div>
          <div><span>NFS status</span><span>Operativ</span></div>
          <div><span>Nav linjestart</span><span>&lt;Null&gt;</span></div>
          <div><span>Nav linjeslutt</span><span>&lt;Null&gt;</span></div>
          <div><span>Bredde sektor</span><span>250</span></div>
          <div><span>Godhetstall</span><span>-1.009272</span></div>
          <div><span>S57 status</span><span>&lt;Null&gt;</span></div>
          <div><span>Målt av</span><span>TRAENEN\5061</span></div>
          <div><span>Målt dato</span><span>2016-11-22 14:02:22</span></div>
          <div><span>Nav ID 1</span><span>&lt;Null&gt;</span></div>
          <div><span>Nav ID 2</span><span>&lt;Null&gt;</span></div>
          <div><span>SKSD status</span><span>&lt;Null&gt;</span></div>
          <div><span>Kystverk rode</span><span>5B</span></div>
          <div><span>PACC</span><span>4.82</span></div>
          <div><span>Retningsverdi</span><span>273.211378</span></div>
          <div><span>Beskrivelse</span><span>Leder midt i mellom Svartskjsr og Kyrkjeholmen</span></div>
          <div><span>Klasse</span><span>OV - Overett</span></div>
          <div class="ro"><span>Opprettet av</span><span>&lt;Null&gt;</span></div>
        </div>
        <div class="pbar"><svg class="i8 up"><use href="#chev"/></svg><i></i><svg class="i8"><use href="#chev"/></svg></div>
      </div>
      <div class="foot"><span>Auto Apply</span><i class="toggle"></i><button>Apply</button><button>Cancel</button></div>
    </div>
    <div class="btabs"><span class="cat"><svg class="i16"><use href="#catalog"/></svg>Catalog</span><span class="cur"><svg class="i16"><use href="#attrs"/></svg>Attributes</span><svg class="i8 dark"><use href="#chev"/></svg></div>
  </section>
</main>
<script src="lights.js"></script>
</body>
</html>
```
FILE: styles.css
```css
*{box-sizing:border-box}
body{margin:0;width:1745px;height:1200px;overflow:hidden;background:#edeef0;color:#444;font:11.6px/15px "Open Sans","Noto Sans",sans-serif;letter-spacing:-.15px;display:flex;flex-direction:column}
svg{display:block;flex:none;width:16px;height:16px}
.sprite{position:absolute;width:0;height:0}
span,b,i{white-space:nowrap}
b{font-weight:600}
.i16{width:16px;height:16px}.i14{width:14px;height:14px}.i12{width:12px;height:12px}.i10{width:10px;height:10px}.i8{width:8px;height:8px}
.blue{color:#4d9fd8}.faint{color:#c6c8ca}.flip{transform:scaleX(-1)}.dark{color:#222}
.up{transform:scaleY(-1)}.lf{transform:rotate(90deg)}.rt{transform:rotate(-90deg)}
.vs{width:1px;height:16px;background:#9a9a9a;flex:none}
.hide{visibility:hidden}

.titlebar{height:33px;padding:2px 0 0 9px;display:grid;align-items:center;grid-template-columns:30px 30px 30px 23px 22px 23px 28px 40px 76px 476px 549px 170px 38px 44px 42px 43px 44px 20px}
.titlebar>.command,.titlebar>.avatar{margin-top:-1px}
.command{width:180px;height:24px;border:1px solid #9b9b9b;border-radius:3px;background:#f7f9f9;display:flex;align-items:center;padding:0 5px 0 4px;color:#7a7a7a}
.command i{margin:0 auto 0 8px;font-size:11.500px;letter-spacing:-.2px}
.command .i12{color:#555;margin-right:1px}
.avatar{width:24px;height:24px;border-radius:12px;background:#f5dfc6;color:#6b4a24;font-size:10.500px;line-height:24px;text-align:center}
.q{font-size:14px}

.tabs{height:33px;padding-left:18px;display:grid;align-items:center;color:#222;font-size:12.500px;letter-spacing:-.1px;grid-template-columns:61px 49px 55px 68px 48px 44px 70px 54px 88px 86px 49px 72px 73px 215px}
.tabs>b{position:relative;justify-self:start}
.tabs>b::after{content:"";position:absolute;left:0;right:0;bottom:-3px;height:2px;background:#0a5ba8}
.pill{height:25px;width:50px;background:#fff;border:1px solid #dcdde0;border-radius:6px;display:flex;align-items:center;justify-content:center}
.pill.wide{width:215px;justify-content:flex-start;padding-left:11px;gap:20px}

.ribbon{margin:0 7px 0 8px;height:101px;background:#fff;border-radius:7px;border:1px solid #e1e2e4;box-shadow:0 1px 2px #c9cacc;display:flex;padding:2px 0 0;color:#1f1f1f;position:relative;flex:none}
.group{display:flex;flex-direction:column;height:97px;position:relative}
.group::after{content:"";position:absolute;right:0;top:3px;bottom:4px;width:1px;background:#d2d3d5}
.g1{width:149px;padding-left:7px}.g2{width:248px;padding-left:8px}.g3{width:271px;padding-left:10px}.g4{width:282px;padding-left:7px}.g5{width:293px;padding-left:11px}.g6{width:193px;padding-left:12px}.g7{width:161px;padding-left:10px}
.body{display:flex;height:81px}
.cap{height:16px;line-height:16px;text-align:center;margin-left:-12px}
.cap.l{display:flex;align-items:center;margin-left:-11px}
.g1 .cap{margin-left:-8px}
.cap.l span{flex:1}
.cap.l svg{width:9px;height:9px;margin:0 7px 0 1px}
.big{display:flex;flex-direction:column;align-items:center;text-align:center;padding-top:4px;flex:none}
.big>svg:first-child{width:32px;height:32px;margin-bottom:4px}
.big>.i8{margin-top:4px}
.big .in{display:inline-block;vertical-align:-1px;margin-left:2px}
.w50{width:50px}.w56{width:56px}.w58{width:58px}.w60{width:60px}.w66{width:66px}.w68{width:68px}.w70{width:70px}.w76{width:76px}.w86{width:86px}
.explore{width:55px;height:76px;border:1px solid #a9abb0;border-radius:3px;margin-top:1px;padding:0}
.explore .top{width:53px;height:37px;background:#e9ebee;border-bottom:1px solid #a9abb0;padding:2px 10.500px;margin-bottom:1px}
.explore .top svg{width:32px;height:32px}
.icons{display:grid;grid-template-columns:26px 26px;grid-auto-rows:26px;align-items:center;padding-left:6px;width:56px}
.smalls{display:flex;flex-direction:column;padding-left:3px}
.smalls>div{height:26px;display:flex;align-items:center;white-space:nowrap}
.smalls svg:first-child{margin-right:5px}
.smalls .second{margin:0 5px 0 9px}
.smalls .in{margin-left:3px}
.off{color:#a3a3a3}
.off>div>svg{margin-left:1px;margin-right:4px}
.g3 .smalls{padding-left:2px}
.g4 .smalls{padding-left:4px}
.g6 .smalls{width:118px;padding-left:0}
.g7 .smalls{padding-left:8px}
.collapse{position:absolute;right:9px;bottom:8px;color:#222}

.main{margin:7px 7px 0;display:grid;grid-template-columns:264px 983px 473px;gap:6px;height:1020px}
.contents{background:#f7f9f9;border:1px solid #d0d3d8;border-radius:4px 4px 0 0;margin-left:-1px}
.phead{height:31px;display:flex;align-items:center;padding:0 6px 0 6px;font-size:14.400px;color:#222;gap:9px}
.phead>span{margin-right:auto}
.phead svg,.phead b{color:#444}
.phead b{font-size:12px}
.phead .pin{width:8px;height:12px;margin-bottom:2px}
.phead .i10{margin-left:2px}
.searchrow{display:flex;padding-left:4px;gap:7px;align-items:center;height:24px}
.fun{width:14px;height:16px;margin-top:-2px}
.search{width:235px;height:24px;border:1px solid #8c8c8c;background:#fff;display:flex;align-items:center;padding:0 5px 0 5px;color:#555}
.search i{margin-right:auto;font-size:12px;letter-spacing:-.3px}
.search .i8{margin-left:13px}
.views{display:flex;height:39px;align-items:center;padding:2px 0 0 19px}
.views svg{width:24px;height:24px;margin-right:8px}
.views .s20{width:20px;height:20px;margin:0 10px 0 2px}
.views .cutoff{width:7px;margin:-2px 11px 0 0}
.views .dots{display:flex;gap:3px;margin-top:6px}.dots i{width:4px;height:4px;background:#222}
.viewline{margin-left:15px;width:204px;height:4px;background:linear-gradient(90deg,#0079c1 32px,#0000 32px),linear-gradient(#0000 2px,#dcdee0 2px)}
h2{font-size:13.200px;font-weight:600;margin:11px 0 0 15px;line-height:18px;letter-spacing:-.2px}
.tr{display:flex;align-items:center;font-size:12px;letter-spacing:-.3px}
.t{width:7px;height:7px;color:#555}
.tr.map{height:26px;padding-left:2px;margin-top:4px;gap:5px}
.lyr{height:25px;padding-left:14px}
.hl{display:flex;align-items:center;gap:5px;height:25px;width:239px;margin-left:2px;padding-left:1px;border:1px solid transparent}
.hl.on{background:#c5dbef;border-color:#0079c1}
.sym{height:22px;display:flex;align-items:center;padding-left:28px}
.dot{width:9px;height:9px}
.line{width:18px;height:2px;background:#b57f74;margin-left:2px;margin-top:1px}
.last{margin-top:3px}

.center{display:flex;flex-direction:column}
.dtabs{height:25px;border-bottom:3px solid #d0d2d6;display:flex;justify-content:space-between;align-items:center;padding-right:5px;flex:none;color:#555}
.dtab{height:22px;background:#d0d2d6;border-radius:5px 5px 0 0;display:flex;align-items:center;gap:5px;padding:2px 7px 0 6px;font-size:12px;letter-spacing:-.25px;color:#444;width:77px}
.dtab .i10{margin-left:4px;color:#666}
.mapview{position:relative;height:457px;border:solid #d0d2d6;border-width:0 1px}
.mapsvg{width:981px;height:457px}
.mapsvg text{font-family:"Open Sans","Noto Sans",sans-serif;letter-spacing:0}
.sea{font-size:13px;font-style:italic;fill:#6f9db5}
.town{font-size:16px;fill:#666}
.land{font-size:22px;font-weight:700;fill:#5f5f5f}
.legend{position:absolute;right:7px;bottom:7px;width:21px;height:18px}
.mapbar{height:25px;border:solid #cfd2d6;border-width:0 1px 1px;background:#f7f9f9;display:grid;align-items:center;padding-left:5px;font-size:12px;letter-spacing:-.28px;grid-template-columns:104px 7px 21px 19px 20px 20px 22px 17px 180px 153px 187px 8px 130px 8px 23px 9px 20px 7px 20px}
.scale{width:100px;height:22px;border:1px solid #b4b6b9;background:#fff;display:flex;align-items:center;justify-content:space-between;padding:0 1px 0 5px;color:#222;letter-spacing:-.45px}
.coords{font-size:11.600px;letter-spacing:-.35px}
.selfeat{display:flex;align-items:center;gap:4px;background:#fff;height:22px;width:126px;letter-spacing:-.48px}
.c10{width:9px;height:9px}
.pause{width:11px;height:14px;border:solid #666;border-width:0 4px}
.second{margin-top:6px}
.dtabs.second .dtab{width:130px;gap:6px}
.second .dtab{letter-spacing:-.4px}
.tb{width:15px;height:13px}
.tpane{flex:1;border:1px solid #c9ccd0;border-top:0;padding:1px 1px 0;display:flex;flex-direction:column;background:#edeef0}
.ttools{height:30px;border:1px solid #b9bcc4;display:grid;align-items:center;padding-left:5px;font-size:11.700px;letter-spacing:-.4px;grid-template-columns:38px 26px 26px 7px 64px repeat(5,26px) 25px 8px 77px repeat(6,26px) 394px 16px}
.ttools b{font-weight:700}
.dim{opacity:.4}.y{--h:#f3e08a}.cy{--f:#aee8fb}
.burger{width:14px;height:13px;border:solid #555;border-width:3px 0;background:linear-gradient(#555,#555) 0 2px/14px 3px no-repeat}
.tgrid{flex:1;margin-top:1px;border:1px solid #c3c5c9;border-width:1px 1px 0;background:#fff;display:flex;font-size:11px;letter-spacing:-.24px}
.cols{width:960px;overflow:hidden}
.row{display:grid;grid-template-columns:23px 67px 235px 236px 238px 60px 119px;height:24px;line-height:22px;border-bottom:1px solid #c9c9c9}
.row span{padding-left:4px;border-right:1px solid #c9c9c9}
.head{font-weight:600;background:#ebebeb;line-height:23px;letter-spacing:-.15px}
.head .corner{background:linear-gradient(135deg,#0000 50%,#c4c4c4 50%) 9px 10px/11px 11px no-repeat,#fff;padding:0}
.head .sorted{background:#c7e0f4;border-bottom:2px solid #0a78c0}
.rec{background:#8dfdfe}
.rec .num{background:#c7e0f4;border-right:2px solid #0a78c0;margin-right:1px}
.rec .id{background:#c7e0f4}
.row .r{text-align:right;padding-right:5px}
.row.add{grid-template-columns:23px 1fr;line-height:24px}
.add .num{background:#ebebeb}
.add span{font-size:11.500px;letter-spacing:-.07px}
.vbar{width:17px;background:#f3f3f3;display:flex;flex-direction:column;justify-content:space-between;padding:6px 4px;color:#c6c6c6}
.hbar{height:17px;background:#e9e9e9;display:flex;align-items:center;gap:6px;padding:0 22px 2px 5px;color:#555}
.hbar i{width:312px;height:9px;border-radius:5px;background:#b3b3b3;margin-right:auto}
.tstatus{height:28px;border-top:1px solid #c9ccd0;margin:0 -1px;padding-bottom:2px;background:#f7f9f9;display:grid;align-items:center;padding-left:9px;font-size:12px;letter-spacing:-.43px;grid-template-columns:26px 41px 23px 22px 93px 13px 388px 39px 47px 18px 7px 23px 14px 108px 14px 67px 7px 20px}
.act{width:32px;height:22px;border:1px solid #3b8fc7;border-radius:3px;background:#c3c6cb;display:flex;align-items:center;justify-content:center}
.nav{width:9px;height:8px}
.clocks{display:flex;background:#eceef0;width:42px;gap:5px;padding:4px 2px;border-radius:2px}
.slider{width:100px;height:14px;position:relative;background:linear-gradient(90deg,#6e6e6e 50%,#ddd 50%) 0 6px/100px 2px no-repeat}
.slider i{position:absolute;left:49px;top:1px;width:2px;height:12px;background:#555}
.minus,.plus{width:8px;height:8px;background:linear-gradient(#444,#444) 0 3px/8px 2px no-repeat}
.minus{width:6px}
.plus{background:linear-gradient(#444,#444) 0 3px/8px 2px no-repeat,linear-gradient(#444,#444) 3px 0/2px 8px no-repeat}
.pct{width:59px;height:24px;line-height:24px;background:#fff;padding:0 3px 0 4px;display:flex;justify-content:space-between;align-items:center;color:#222}

.right{display:flex;flex-direction:column}
.attr{height:1000px;border:1px solid #0079c1;border-radius:4px 4px 0 0;background:#f7f9f9;display:flex;flex-direction:column}
.attr .phead{color:#1a80c0;flex:none;height:31px}
.stabs{display:flex;gap:10px;padding-left:7px;height:24px;align-items:flex-start;font-size:12.500px;flex:none;letter-spacing:-.15px}
.stabs b,.stabs span{line-height:22px;height:24px;padding-top:2px}
.stabs b{border-bottom:2px solid #0079c1;line-height:22px}
.low{height:34px;padding-top:3px}
.chg{height:52px;margin-top:2px;display:flex;align-items:center;padding:0 9px 0 15px;gap:7px;font-size:12px;flex:none;margin-bottom:-1px}
.chg svg:first-child{width:24px;height:24px;opacity:.8}
.chg span{margin-right:auto;letter-spacing:-.25px}
.tree{height:145px;font-size:12px;letter-spacing:-.32px;flex:none}
.tree>div{height:18px;display:flex;align-items:center}
.tree .t{color:#222;margin-right:8px}
.n0{padding-left:7px}.n1{padding-left:26px}.n2{padding-left:45px}.n3{padding-left:67px}
.n1 .t{margin-right:5px!important}
.tree .t.c{height:8px;margin-right:6px}
.n3 .i12{margin-right:5px}
.picked{height:18px;line-height:16px;flex:1;margin-right:1px;border:1px solid #6db7e8;background:#c5dbef;padding-left:1px}
.split{height:12px;background:#eaeaea;display:flex;justify-content:flex-end;padding:2px 1px 0 0;flex:none;margin-top:-1px}
.split svg{width:32px;height:9px}
.props{flex:1;border-top:1px solid #c6c8ca;display:flex;overflow:hidden;min-height:0}
.plist{width:453px;font-size:11.800px;letter-spacing:-.3px}
.plist>div{height:27px;display:grid;grid-template-columns:103px 1fr;align-items:center;padding-left:6px;border-bottom:1px solid #c6c8ca;border-left:2px solid #7b7b7b}
.plist>div>span:first-child{letter-spacing:-.15px}
.plist>.ro{color:#8b8b8b;border-left-color:#cfd1d3}
.pbar{width:18px;background:#ececec;border-left:1px solid #c6c8ca;display:flex;flex-direction:column;align-items:center;padding:5px 0;color:#555}
.pbar i{width:9px;height:578px;border-radius:5px;background:#b5b5b5;margin:6px 0 auto}
.foot{height:34px;display:flex;align-items:center;padding:0 4px 0 6px;font-size:12px;letter-spacing:-.05px;flex:none}
.toggle{width:26px;height:14px;border-radius:7px;background:radial-gradient(circle at 7px 7px,#fff 5.500px,#999 6.500px);margin:-2px auto 0 4px}
.foot button{width:70px;height:24px;border:1px solid #bfc2c5;border-radius:3px;background:#f9fbfb;color:#ccc;font:inherit;margin-left:10px;padding:0}
.btabs{display:flex;height:21px;align-items:center;font-size:12px;letter-spacing:-.2px;padding:0 5px 0 6px}
.btabs>span{display:flex;align-items:center;gap:5px}
.cat{width:68px}
.cur{height:22px;width:85px;margin:-2px auto 0 0;border:1px solid #0079c1;border-top-color:#f7f9f9;border-radius:0 0 4px 4px;background:#f7f9f9;padding-left:5px;color:#0a63ad}
```
FILE: lights.js
```js
// Navigation lights along the coast: [x1, y1, x2, y2, spread, count]
const runs = [
  [172,1455,222,1395,26,75],[215,1395,300,1345,24,70],[300,1345,420,1308,22,60],[255,1420,310,1405,16,14],[330,1360,430,1345,18,24],[370,1400,412,1385,14,7],
  [450,1290,550,1280,38,130],[490,1325,545,1335,12,16],[510,1235,625,1192,10,30],[515,1240,600,1262,16,45],[600,1262,700,1225,22,60],[680,1200,790,1148,10,32],
  [740,1125,850,1130,32,100],[800,1160,850,1160,10,16],[670,1276,700,1272,8,8],[720,1266,775,1252,10,16],[780,1225,832,1216,14,14],
  [840,1085,930,1080,32,55],[850,1060,950,1000,50,170],[890,1020,1000,960,35,110],[930,935,1000,930,18,30],[880,962,920,945,7,9],[812,1048,850,1030,8,8],[1010,985,1100,979,5,18],
  [1000,935,1070,895,14,34],[1050,885,1165,872,22,85],[1040,873,1100,868,8,14],[1150,860,1225,805,18,42],[1130,826,1160,815,5,6],[1190,835,1265,865,38,20],
  [1120,742,1220,700,16,50],[1150,745,1230,770,22,60],[1000,798,1150,778,15,60],[940,840,1000,810,6,12],[872,862,910,853,5,10],[1225,770,1335,775,25,50],
  [1245,692,1315,672,14,26],[1260,720,1330,715,18,24],[1340,700,1460,730,40,75],[1375,670,1485,638,11,36],[1350,740,1440,765,16,18],
  [1488,680,1510,625,12,24],[1510,625,1615,590,14,48],[1575,625,1600,668,13,26],[1630,605,1715,585,16,34],[1690,610,1725,590,12,14],[1665,650,1675,620,6,5],[1705,668,1730,648,6,6],
  [1740,582,1810,605,16,38],[1745,625,1780,648,10,6],[1820,578,1880,568,10,18],[1850,600,1905,612,9,14],[1895,535,1935,548,10,16],[1910,575,1945,580,14,22],[1950,565,1975,530,6,8],
  [1995,530,2085,540,16,36],[1975,580,2055,580,12,24],[2010,598,2040,600,6,10],[2050,545,2135,550,8,16],[2085,495,2130,492,8,20],[2110,515,2170,530,10,14],
  [2155,498,2210,495,8,16],[2225,495,2330,490,11,28],[2275,515,2300,515,8,8],[2210,550,2255,570,14,20],[2215,590,2235,580,5,5],[2368,545,2425,538,7,12],
  [2420,510,2470,495,8,8],[2495,495,2540,492,6,9],[2510,535,2555,550,12,20],[2605,512,2655,525,6,10],[2680,535,2730,540,8,8],[2575,588,2615,590,6,10],
  [2655,608,2735,625,12,26],[2685,595,2750,590,8,9],[2812,572,2825,562,6,9]
];
// Isolated lights away from the coast
const single = [[1243,247],[490,1003],[412,1076],[419,1072],[334,1108],[352,1102],[360,1096],[368,1097],[400,1183],[406,1183],[406,1282],[566,1291],[359,1427],[785,1088],[706,1162],
  [1002,1017],[1273,835],[1253,826],[1468,712],[1497,613],[2713,197],[2560,439],[1715,568],[1660,572],[1636,667],[1970,527],[2070,507],[2311,530],[2273,551],[2276,480],[2476,487],
  [2560,505],[2563,502],[2777,548],[2755,621],[2793,622],[2644,592],[2371,558],[2383,523],[2135,550]];
let seed = 7;
const rnd = () => (seed = (seed * 16807) % 2147483647) / 2147483647;
const dots = [];
for (const [x1, y1, x2, y2, s, n] of runs) {
  const len = Math.hypot(x2 - x1, y2 - y1), nx = -(y2 - y1) / len, ny = (x2 - x1) / len;
  for (let k = 0; k < n; k++) {
    const t = rnd(), off = (rnd() + rnd() - 1) * s * 1.4;
    dots.push([x1 + (x2 - x1) * t + nx * off, y1 + (y2 - y1) * t + ny * off]);
  }
}
const layer = document.getElementById('lights');
for (const [x, y] of dots.concat(single)) {
  const c = document.createElementNS('http://www.w3.org/2000/svg', 'circle');
  c.setAttribute('cx', x.toFixed(0));
  c.setAttribute('cy', y.toFixed(0));
  c.setAttribute('r', 7.5);
  c.setAttribute('fill', '#5b2093');
  c.setAttribute('stroke', '#0d0414');
  c.setAttribute('stroke-width', 3);
  layer.appendChild(c);
}
document.querySelectorAll('.mapsvg text').forEach(t => t.setAttribute('lengthAdjust', t.closest('.land') ? 'spacing' : 'spacingAndGlyphs'));
```
